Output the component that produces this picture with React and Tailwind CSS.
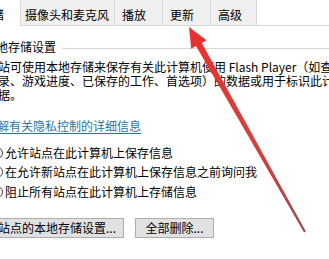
import React from "react";

function Radio({ children }) {
  return (
    <div className="flex items-center h-[14px] leading-[14px] whitespace-nowrap">
      <span className="ml-[-9px] w-[12px] h-[12px] rounded-full border border-[#444] bg-white shrink-0" />
      <span className="ml-[2px]">{children}</span>
    </div>
  );
}

export default function App() {
  return (
    <div className="relative w-[329px] h-[259px] overflow-hidden bg-white text-black text-[12px] font-['Noto_Sans_CJK_SC','Microsoft_YaHei',sans-serif]">
      {/* tab strip */}
      <div className="flex h-[26px] border-b border-[#d9d9d9] leading-[14px] whitespace-nowrap">
        <div className="w-[21px] h-[26px] bg-white border-r border-[#d9d9d9] flex items-center pt-[4px] overflow-hidden relative z-10">
          <span className="ml-[-8px]">储</span>
        </div>
        <div className="w-[94px] bg-[#f0f0f0] border-r border-[#d9d9d9] flex items-center pt-[5px] pl-[4px]">摄像头和麦克风</div>
        <div className="w-[48px] bg-[#f0f0f0] border-r border-[#d9d9d9] flex items-center pt-[5px] pl-[7px]">播放</div>
        <div className="w-[48px] bg-[#f0f0f0] border-r border-[#d9d9d9] flex items-center pt-[5px] pl-[7px]">更新</div>
        <div className="w-[46px] bg-[#f0f0f0] border-r border-[#d9d9d9] flex items-center pt-[5px] pl-[7px]">高级</div>
        <div className="flex-1 bg-white" />
      </div>

      {/* content */}
      <div className="flex flex-col">
        <div className="mt-[14px] flex items-center h-[14px] leading-[14px]">
          <span className="ml-[-4px] whitespace-nowrap">地存储设置</span>
          <div className="flex-1 h-px bg-[#d5d5d5] ml-[6px] mt-[2px]" />
        </div>

        <div className="mt-[6px] ml-[-2px] leading-[14px] whitespace-nowrap">
          <div>站可使用本地存储来保存有关此计算机使用 Flash Player（如查看</div>
          <div>录、游戏进度、已保存的工作、首选项）的数据或用于标识此计</div>
          <div>据。</div>
        </div>

        <div className="mt-[17px] ml-[-3px] leading-[14px] whitespace-nowrap">
          <span className="text-[#2a76a0] underline underline-offset-2">解有关隐私控制的详细信息</span>
        </div>

        <div className="mt-[13px] flex flex-col gap-[5px]">
          <Radio>允许站点在此计算机上保存信息</Radio>
          <Radio>在允许新站点在此计算机上保存信息之前询问我</Radio>
          <div className="mt-[1px]">
            <Radio>阻止所有站点在此计算机上存储信息</Radio>
          </div>
        </div>

        <div className="mt-[19px] flex items-center gap-[11px]">
          <button className="ml-[-10px] w-[134px] h-[20px] bg-[#e1e1e1] border border-[#adadad] leading-[14px] whitespace-nowrap">
            站点的本地存储设置...
          </button>
          <button className="w-[79px] h-[20px] bg-[#e1e1e1] border border-[#adadad] leading-[14px] whitespace-nowrap">
            全部删除...
          </button>
        </div>
      </div>

      {/* red annotation arrow overlay */}
      <svg className="absolute inset-0 pointer-events-none" width="329" height="259" viewBox="0 0 329 259">
        <defs>
          <linearGradient id="arrowGrad" x1="189" y1="27" x2="305" y2="232" gradientUnits="userSpaceOnUse">
            <stop offset="0" stopColor="#e8302f" />
            <stop offset="0.6" stopColor="#d8403e" />
            <stop offset="1" stopColor="#9a4a45" />
          </linearGradient>
        </defs>
        <polygon
          points="189,27 206.5,40.2 201.8,43 305.9,231.5 304.1,232.5 196,46 191.2,48.8"
          fill="url(#arrowGrad)"
        />
      </svg>
    </div>
  );
}
